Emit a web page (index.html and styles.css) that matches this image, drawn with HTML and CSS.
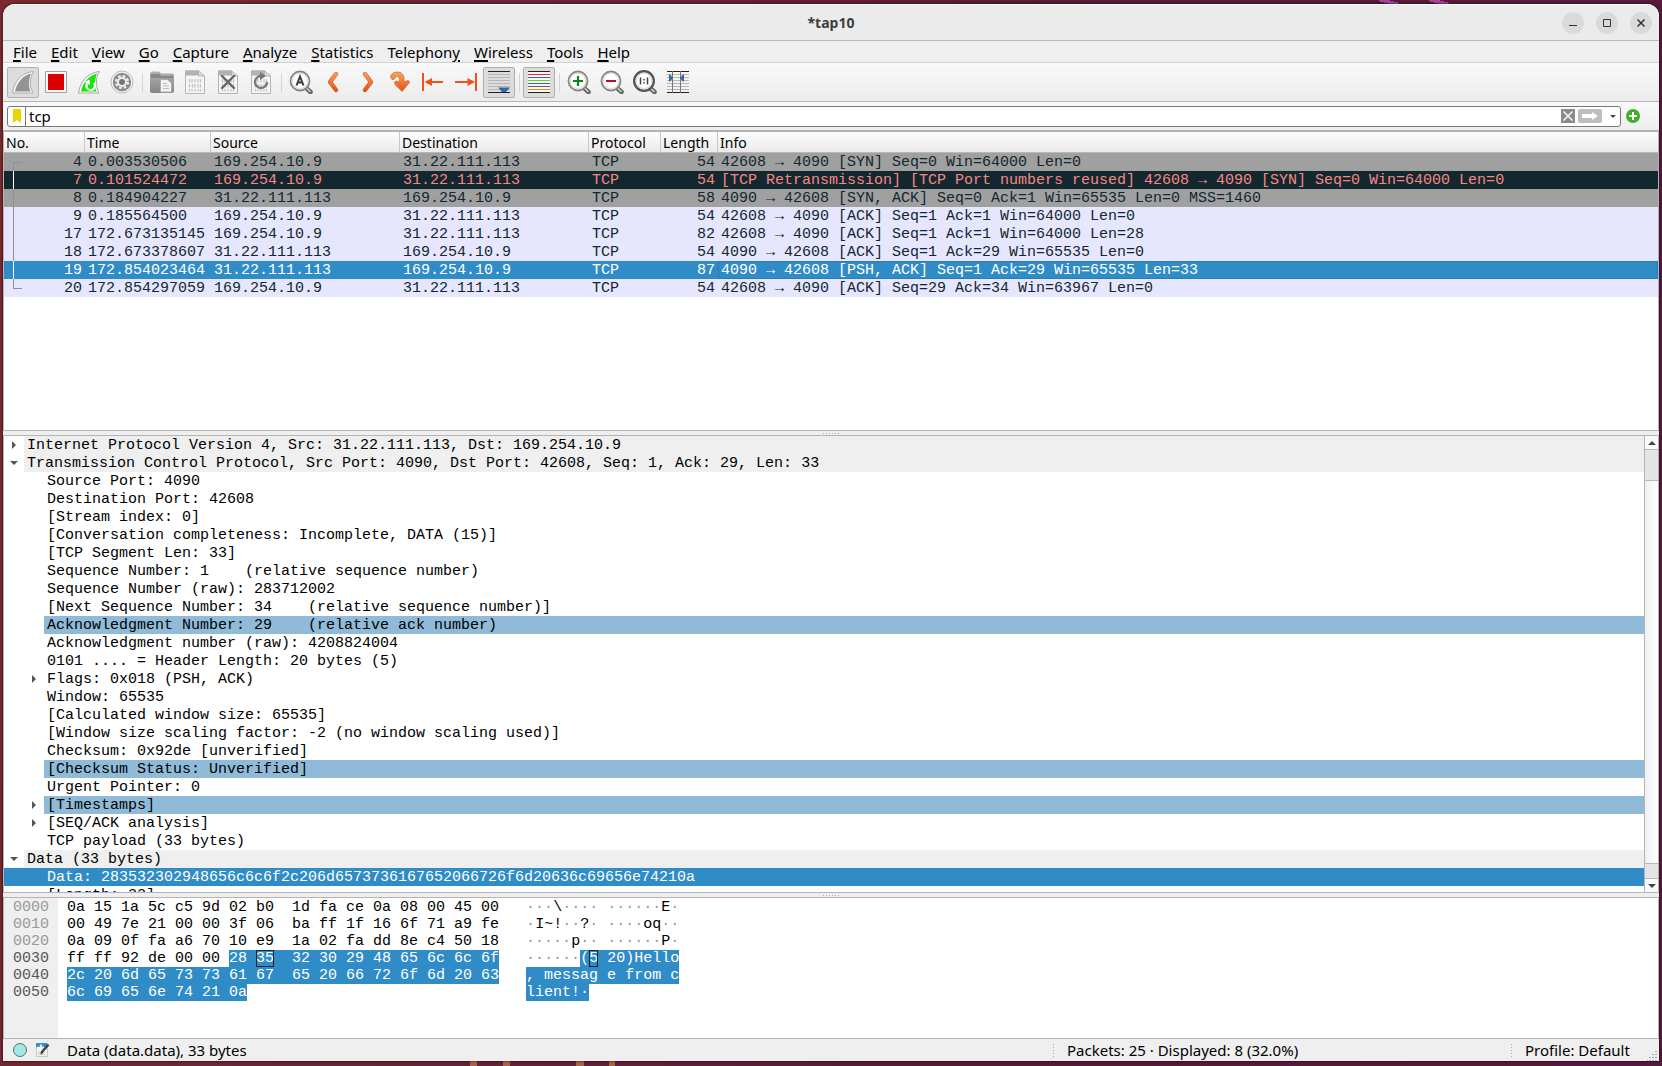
FILE: index.html
```html
<!DOCTYPE html>
<html lang="en">

<head>
    <meta charset="UTF-8">
    <title>*tap10</title>
    <link rel="stylesheet" href="styles.css">
</head>

<body>
    <div class="window">
        <!-- title bar -->
        <header class="titlebar">
            <h1>*tap10</h1>
            <div class="window-buttons">
                <button aria-label="Minimize"><svg width="22" height="22"><path d="M7 13.5h8" stroke="#333" /></svg></button>
                <button aria-label="Maximize"><svg width="22" height="22"><path d="M7.5 7.5h7v7h-7z" fill="none" stroke="#333" /></svg></button>
                <button aria-label="Close"><svg width="22" height="22"><path d="M7.500 7.500l7 7m0-7l-7 7" stroke="#333" stroke-width="1.500" /></svg></button>
            </div>
        </header>

        <!-- menu -->
        <nav class="menubar">
            <button><u>F</u>ile</button>
            <button><u>E</u>dit</button>
            <button><u>V</u>iew</button>
            <button><u>G</u>o</button>
            <button><u>C</u>apture</button>
            <button><u>A</u>nalyze</button>
            <button><u>S</u>tatistics</button>
            <button>Telephon<u>y</u></button>
            <button><u>W</u>ireless</button>
            <button><u>T</u>ools</button>
            <button><u>H</u>elp</button>
        </nav>

        <!-- toolbar -->
        <svg class="defs" width="0" height="0">
            <defs>
                <linearGradient id="orange" gradientUnits="userSpaceOnUse" x1="0" y1="2" x2="0" y2="22">
                    <stop offset="0" stop-color="#f8a860" />
                    <stop offset="1" stop-color="#ea4a10" />
                </linearGradient>
                <linearGradient id="gray" x1="0" y1="0" x2="0" y2="1">
                    <stop offset="0" stop-color="#b0b0b0" />
                    <stop offset="1" stop-color="#858585" />
                </linearGradient>
                <symbol id="page" viewBox="0 0 24 24">
                    <path d="M2.500 1h13l6 5v17.500h-19z" fill="#f6f6f6" stroke="#b4b4b4" />
                    <path d="M2 .500h14l-1 5H2z" fill="#b2b2b2" />
                    <path d="M15.500 1l6 5h-6z" fill="#ddd" stroke="#b4b4b4" />
                    <path d="M6.500 9v3.500M9 9v3.500M12 9v3.500M15 9v3.500M17.500 9v3.500M6.500 14v3.500M9.500 14v3.500M12 14v3.500M15 14v3.500M17.500 14v3.500M6.500 19v2.500M9 19v2.500M12 19v2.500M15 19v2.500M17.500 19v2.500" stroke="#c2c2c2" stroke-width="1.300" />
                </symbol>
                <symbol id="lens" viewBox="0 0 24 24">
                    <path d="M16 17l5.500 5" stroke="#63645f" stroke-width="4.500" stroke-linecap="round" />
                    <path d="M17.500 18l3.500 3.500" stroke="#d4d5cf" stroke-width="1.600" stroke-linecap="round" />
                    <circle cx="11" cy="11" r="9.500" fill="#fff" stroke="#85867f" stroke-width="1.800" />
                    <circle cx="11" cy="11" r="7.800" fill="none" stroke="#deded8" stroke-width="1.200" />
                </symbol>
            </defs>
        </svg>
        <div class="toolbar">
            <button class="pressed" aria-label="Start capture"><svg viewBox="0 0 24 24"><path d="M1.500 23C3 12 10 2.500 22.500 1.500c-4 6-4 15-.500 21.500z" fill="#f4f4f4" stroke="#b0b0b0" /><path d="M4 21.500C6 12.500 11.500 5.500 20 3.500c-2.500 6-2.500 12.500-.500 18z" fill="#949494" /></svg></button>
            <button aria-label="Stop capture"><svg viewBox="0 0 24 24"><path d="M1.500 1.500h21v21h-21z" fill="#f8f8f8" stroke="#a0a0a0" /><path d="M4 4h16v16H4z" fill="#db0000" /></svg></button>
            <button aria-label="Restart capture"><svg viewBox="0 0 24 24"><path d="M1.500 23C3 12 10 2.500 22.500 1.500c-4 6-4 15-.500 21.500z" fill="#f8f8f8" stroke="#aaa" /><path d="M4 21.500C6 12.500 11.500 5.500 20 3.500c-2.500 6-2.500 12.500-.500 18z" fill="#18e40c" /><path d="M10 13.500c-1.500 3 0 6.500 3.500 6.500 4.500 0 5.500-4.500 3.500-7" fill="none" stroke="#fff" stroke-width="2.200" /><path d="M7.500 12l5-2.500.500 5.500z" fill="#fff" /></svg></button>
            <button aria-label="Capture options"><svg viewBox="0 0 24 24"><circle cx="12" cy="12" r="11" fill="#f4f4f4" stroke="#bbb" /><circle cx="12" cy="12" r="9.200" fill="#8b8b8b" /><circle cx="12" cy="12" r="6" fill="none" stroke="#eee" stroke-width="2.200" stroke-dasharray="2.700 2.010" /><circle cx="12" cy="12" r="4" fill="#777" stroke="#eee" stroke-width="2" /></svg></button>
            <span class="separator"></span>
            <button aria-label="Open file"><svg viewBox="0 0 24 24"><path d="M0 4q0-2.500 2-2.500h7l2 2h11q2 0 2 2V21q0 2-2 2H2q-2 0-2-2z" fill="url(#gray)" /><path d="M1 8V4h8l2 2h12v2z" fill="#888" /><path d="M10.500 9.500h7l4 3.500v9h-11z" fill="#f2f2f2" stroke="#aaa" /><path d="M13 13.500h4M13 16h6M13 18.500h6" stroke="#bbb" /></svg></button>
            <button aria-label="Save file"><svg viewBox="0 0 24 24"><use href="#page" /></svg></button>
            <button aria-label="Close file"><svg viewBox="0 0 24 24"><use href="#page" /><path d="M6 6l12 12M18 6L6 18" stroke="#666" stroke-width="2.400" stroke-linecap="round" /></svg></button>
            <button aria-label="Reload file"><svg viewBox="0 0 24 24"><use href="#page" /><path d="M12 6a6 6 0 1 0 6 6" fill="none" stroke="#777" stroke-width="2.400" /><path d="M11 2l6 4-6 4z" fill="#777" /></svg></button>
            <span class="separator"></span>
            <button aria-label="Find packet"><svg viewBox="0 0 24 24"><use href="#lens" /><path d="M7.500 15.500L11 6.500l3.500 9M8.500 12.500h5" fill="none" stroke="#3c3c3c" stroke-width="2" /></svg></button>
            <button aria-label="Previous packet"><svg viewBox="0 0 24 24"><path d="M14 4l-6 8 6 8" fill="none" stroke="#c95f30" stroke-width="4.400" stroke-linecap="round" stroke-linejoin="round" /><path d="M14 4l-6 8 6 8" fill="none" stroke="url(#orange)" stroke-width="3.200" stroke-linecap="round" stroke-linejoin="round" /></svg></button>
            <button aria-label="Next packet"><svg viewBox="0 0 24 24"><path d="M10 4l6 8-6 8" fill="none" stroke="#c95f30" stroke-width="4.400" stroke-linecap="round" stroke-linejoin="round" /><path d="M10 4l6 8-6 8" fill="none" stroke="url(#orange)" stroke-width="3.200" stroke-linecap="round" stroke-linejoin="round" /></svg></button>
            <button aria-label="Go to packet"><svg viewBox="0 0 24 24"><path d="M2.500 7C3 1 15.500-.500 16 8v4l4-1.500q3 1-.500 4.500L14 21.500 7.500 15q-2.500-3.500 1-4l3 1V9c0-3-4-3.500-5 0q-3 2-4-2z" fill="url(#orange)" stroke="#d4713c" stroke-width=".8" /></svg></button>
            <button aria-label="First packet"><svg viewBox="0 0 24 24"><path d="M2 3v18M5 12h17" stroke="#f4511a" stroke-width="2" /><path d="M3.500 12L11 8v8z" fill="#f4511a" /></svg></button>
            <button aria-label="Last packet"><svg viewBox="0 0 24 24"><path d="M22 3v18M1 12h18" stroke="#f4511a" stroke-width="2" /><path d="M21 12l-7.500-4v8z" fill="#f4511a" /></svg></button>
            <button class="pressed" aria-label="Auto scroll"><svg viewBox="0 0 24 24"><path d="M1 1.500h22M1 22.500h22" stroke="#222" /><path d="M1 4.500h22M1 7.500h22M1 10.500h22M1 13.500h22M1 16.500h22M1 19.500h22" stroke="#b8b8b0" /><path d="M11 17.500h12l-4 4.500h-4z" fill="#3465a4" /></svg></button>
            <span class="separator"></span>
            <button class="pressed" aria-label="Colorize packets"><svg viewBox="0 0 24 24"><path d="M1 1h22v22H1z" fill="#fff" opacity=".7" /><path d="M1 1.500h22M1 22.500h22" stroke="#222" /><path d="M1 4.500h22" stroke="#ef2929" /><path d="M1 7.500h22" stroke="#3465a4" /><path d="M1 10.500h22" stroke="#73d216" /><path d="M1 13.500h22" stroke="#3465a4" /><path d="M1 16.500h22" stroke="#75507b" /><path d="M1 19.500h22" stroke="#c4a000" /></svg></button>
            <span class="separator"></span>
            <button aria-label="Zoom in"><svg viewBox="0 0 24 24"><use href="#lens" /><path d="M6 11h10M11 6v10" stroke="#108020" stroke-width="2.200" /></svg></button>
            <button aria-label="Zoom out"><svg viewBox="0 0 24 24"><use href="#lens" /><path d="M6 11h10" stroke="#c80820" stroke-width="2.200" /></svg></button>
            <button aria-label="Normal size"><svg viewBox="0 0 24 24"><use href="#lens" /><circle cx="11" cy="11" r="10" fill="none" stroke="#555" stroke-width="2" /><path d="M7.500 7.500v7M14.500 7.500v7M11 9v1.500M11 12v1.500" stroke="#444" stroke-width="1.500" /></svg></button>
            <button aria-label="Resize columns"><svg viewBox="0 0 24 24"><path d="M1 1.500h22M1 22.500h22" stroke="#222" /><path d="M1 4.500h22M1 7.500h22M1 10.500h22M1 13.500h22M1 16.500h22M1 19.500h22" stroke="#b8b8b0" /><path d="M6.500 1v22M14.500 1v22" stroke="#777" /><path d="M3 4.500h1l3 3.500-3 3.500H3zM18 4.500h-1L14 8l3 3.500h1z" fill="#3465a4" /></svg></button>
        </div>

        <!-- display filter -->
        <form class="filterbar">
            <div class="filter">
                <button type="button" class="bookmark" aria-label="Bookmarks"><svg width="8" height="14"><path d="M0 0h8v14l-4-3-4 3z" fill="#edd400" /></svg></button>
                <input type="text" value="tcp" aria-label="Display filter">
                <button type="button" aria-label="Clear"><svg width="14" height="14"><rect width="14" height="14" rx="1" fill="#8c8c86" /><path d="M2.500 2.500l9 9m0-9l-9 9" stroke="#fff" stroke-width="1.400" /></svg></button>
                <button type="button" aria-label="Apply"><svg width="24" height="14"><rect width="24" height="14" rx="2" fill="#bebebe" /><path d="M4 5h10V3l6 4-6 4V9H4z" fill="#fff" /></svg></button>
                <button type="button" class="history" aria-label="Filter history"><svg width="6" height="3"><path d="M0 0h6L3 3z" fill="#444" /></svg></button>
            </div>
            <button type="button" aria-label="Add filter button"><svg width="14" height="14"><circle cx="7" cy="7" r="7" fill="#3fae2a" /><path d="M3 7h8M7 3v8" stroke="#fff" stroke-width="2" /></svg></button>
        </form>

        <!-- packet list -->
        <section class="packet-list">
            <table>
                <colgroup>
                    <col class="col-no">
                    <col class="col-time">
                    <col class="col-addr">
                    <col class="col-addr">
                    <col class="col-proto">
                    <col class="col-len">
                    <col>
                </colgroup>
                <thead>
                    <tr><th>No.</th><th>Time</th><th>Source</th><th>Destination</th><th>Protocol</th><th>Length</th><th>Info</th></tr>
                </thead>
                <tbody>
                    <tr class="syn first"><td>4</td><td>0.003530506</td><td>169.254.10.9</td><td>31.22.111.113</td><td>TCP</td><td>54</td><td>42608 → 4090 [SYN] Seq=0 Win=64000 Len=0</td></tr>
                    <tr class="bad"><td>7</td><td>0.101524472</td><td>169.254.10.9</td><td>31.22.111.113</td><td>TCP</td><td>54</td><td>[TCP Retransmission] [TCP Port numbers reused] 42608 → 4090 [SYN] Seq=0 Win=64000 Len=0</td></tr>
                    <tr class="syn"><td>8</td><td>0.184904227</td><td>31.22.111.113</td><td>169.254.10.9</td><td>TCP</td><td>58</td><td>4090 → 42608 [SYN, ACK] Seq=0 Ack=1 Win=65535 Len=0 MSS=1460</td></tr>
                    <tr><td>9</td><td>0.185564500</td><td>169.254.10.9</td><td>31.22.111.113</td><td>TCP</td><td>54</td><td>42608 → 4090 [ACK] Seq=1 Ack=1 Win=64000 Len=0</td></tr>
                    <tr><td>17</td><td>172.673135145</td><td>169.254.10.9</td><td>31.22.111.113</td><td>TCP</td><td>82</td><td>42608 → 4090 [ACK] Seq=1 Ack=1 Win=64000 Len=28</td></tr>
                    <tr><td>18</td><td>172.673378607</td><td>31.22.111.113</td><td>169.254.10.9</td><td>TCP</td><td>54</td><td>4090 → 42608 [ACK] Seq=1 Ack=29 Win=65535 Len=0</td></tr>
                    <tr class="selected"><td>19</td><td>172.854023464</td><td>31.22.111.113</td><td>169.254.10.9</td><td>TCP</td><td>87</td><td>4090 → 42608 [PSH, ACK] Seq=1 Ack=29 Win=65535 Len=33</td></tr>
                    <tr class="last"><td>20</td><td>172.854297059</td><td>169.254.10.9</td><td>31.22.111.113</td><td>TCP</td><td>54</td><td>42608 → 4090 [ACK] Seq=29 Ack=34 Win=63967 Len=0</td></tr>
                </tbody>
            </table>
        </section>
        <div class="splitter"></div>

        <!-- packet details -->
        <section class="details">
            <ul class="tree">
                <li class="top closed"><span>Internet Protocol Version 4, Src: 31.22.111.113, Dst: 169.254.10.9</span></li>
                <li class="top open"><span>Transmission Control Protocol, Src Port: 4090, Dst Port: 42608, Seq: 1, Ack: 29, Len: 33</span></li>
                <li><span>Source Port: 4090</span></li>
                <li><span>Destination Port: 42608</span></li>
                <li><span>[Stream index: 0]</span></li>
                <li><span>[Conversation completeness: Incomplete, DATA (15)]</span></li>
                <li><span>[TCP Segment Len: 33]</span></li>
                <li><span>Sequence Number: 1    (relative sequence number)</span></li>
                <li><span>Sequence Number (raw): 283712002</span></li>
                <li><span>[Next Sequence Number: 34    (relative sequence number)]</span></li>
                <li class="related"><span>Acknowledgment Number: 29    (relative ack number)</span></li>
                <li><span>Acknowledgment number (raw): 4208824004</span></li>
                <li><span>0101 .... = Header Length: 20 bytes (5)</span></li>
                <li class="closed"><span>Flags: 0x018 (PSH, ACK)</span></li>
                <li><span>Window: 65535</span></li>
                <li><span>[Calculated window size: 65535]</span></li>
                <li><span>[Window size scaling factor: -2 (no window scaling used)]</span></li>
                <li><span>Checksum: 0x92de [unverified]</span></li>
                <li class="related"><span>[Checksum Status: Unverified]</span></li>
                <li><span>Urgent Pointer: 0</span></li>
                <li class="closed related"><span>[Timestamps]</span></li>
                <li class="closed"><span>[SEQ/ACK analysis]</span></li>
                <li><span>TCP payload (33 bytes)</span></li>
                <li class="top open"><span>Data (33 bytes)</span></li>
                <li class="selected"><span>Data: 283532302948656c6c6f2c206d6573736167652066726f6d20636c69656e74210a</span></li>
                <li><span>[Length: 33]</span></li>
            </ul>
            <div class="scrollbar">
                <button aria-label="Scroll up"><svg width="8" height="4"><path d="M0 4h8L4 0z" fill="#444" /></svg></button>
                <div class="thumb"></div>
                <div class="groove"></div>
                <div class="thumb thumb-end"></div>
                <button aria-label="Scroll down"><svg width="8" height="4"><path d="M0 0h8L4 4z" fill="#444" /></svg></button>
            </div>
        </section>
        <div class="splitter"></div>

        <!-- packet bytes -->
        <section class="bytes">
<pre class="offsets"><i>0000
0010
0020</i>
0030
0040
0050</pre>
<pre class="hex">0a 15 1a 5c c5 9d 02 b0  1d fa ce 0a 08 00 45 00
00 49 7e 21 00 00 3f 06  ba ff 1f 16 6f 71 a9 fe
0a 09 0f fa a6 70 10 e9  1a 02 fa dd 8e c4 50 18
ff ff 92 de 00 00 <mark>28 <b>35</b>  32 30 29 48 65 6c 6c 6f</mark>
<mark>2c 20 6d 65 73 73 61 67  65 20 66 72 6f 6d 20 63</mark>
<mark>6c 69 65 6e 74 21 0a</mark></pre>
<pre class="ascii"><i>···</i>\<i>···· ······</i>E<i>·</i>
<i>·</i>I~!<i>··</i>?<i>· ····</i>oq<i>··</i>
<i>·····</i>p<i>·· ······</i>P<i>·</i>
<i>······</i><mark>(<b>5</b> 20)Hello</mark>
<mark>, messag e from c</mark>
<mark>lient!·</mark></pre>
        </section>

        <!-- status bar -->
        <footer class="statusbar">
            <button aria-label="Expert information"><svg width="14" height="14"><circle cx="7" cy="7" r="6.500" fill="#a0e8e4" stroke="#52706e" /></svg></button>
            <button aria-label="Capture comment"><svg width="14" height="14"><path d="M.500 1h11v12.500H.500z" fill="#f4f4f0" stroke="#c8c8c4" /><path d="M0 0h11v4H0z" fill="#3a8fc8" /><path d="M2 4.500h6M5 1.500v6" stroke="#fff" stroke-width="1.600" /><path d="M2 9.500h7M2 11.500h7" stroke="#ccc" /><path d="M12.500 1.500l-7 8" stroke="#444" stroke-width="2.500" /><path d="M4.500 11.500l.500-3 2 1.500z" fill="#222" /></svg></button>
            <span class="status-field">Data (data.data), 33 bytes</span>
            <span class="status-packets">Packets: 25 · Displayed: 8 (32.0%)</span>
            <span class="status-profile">Profile: Default</span>
            <svg class="grip" width="10" height="10"><path d="M9 0v10M6 3v7M3 6v4M0 9v1" stroke="#aaa" stroke-width="2" stroke-dasharray="1 2" /></svg>
        </footer>
    </div>
</body>

</html>
```
FILE: styles.css
```css
* {
    box-sizing: border-box;
}

body {
    height: 100vh;
    margin: 0;
    padding: 4px 3px 5px;
    font: 15px/20px "Noto Sans", "Open Sans", sans-serif;
    color: #000;
    /* desktop wallpaper, only its edges show around the window */
    background:
        linear-gradient(15deg, transparent 30%, #a8459a 30%, #a8459a 70%, transparent 70%) 84% 0 / 20px 4px no-repeat,
        linear-gradient(15deg, transparent 30%, #a8459a 30%, #a8459a 70%, transparent 70%) 87% 0 / 20px 4px no-repeat,
        linear-gradient(#b0604c, #b0604c) 28.4% 100% / 7px 5px no-repeat,
        linear-gradient(#b0604c, #b0604c) 30.4% 100% / 7px 5px no-repeat,
        linear-gradient(#b0604c, #b0604c) 34.8% 100% / 8px 5px no-repeat,
        linear-gradient(#b0604c, #b0604c) 36.8% 100% / 6px 5px no-repeat,
        linear-gradient(100deg, #7b2a2e, #6c2338 30%, #571b38 60%, #571a3e);
}

button {
    display: flex;
    align-items: center;
    justify-content: center;
    padding: 0;
    border: none;
    background: none;
    font: inherit;
    color: inherit;
}

.window {
    display: flex;
    flex-direction: column;
    height: 100%;
    overflow: hidden;
    border-radius: 12px 12px 0 0;
    background: #efefef;
    box-shadow: 0 0 2px 1px rgba(0, 0, 0, 0.4);
}

.defs {
    position: absolute;
}

/* title bar */
.titlebar {
    display: grid;
    grid-template-columns: 1fr auto 1fr;
    align-items: center;
    flex: none;
    height: 37px;
    padding: 0 7px;
    border-top: 1px solid #fff;
    border-bottom: 1px solid #bbb;
    background: #ebebeb;
}

.titlebar h1 {
    grid-column: 2;
    margin: 0;
    font-size: 14px;
    color: #3d3d3d;
}

.window-buttons {
    display: flex;
    justify-content: flex-end;
    gap: 12px;
}

.window-buttons button {
    border-radius: 50%;
    background: #dadada;
}

/* menu */
.menubar {
    display: flex;
    flex: none;
    gap: 14px;
    height: 22px;
    padding: 0 10px;
    border-bottom: 1px solid #d2d2d2;
}

.menubar button {
    display: block;
}

.menubar u {
    text-decoration-thickness: 2px;
    text-underline-offset: 2px;
}

/* toolbar */
.toolbar {
    display: flex;
    align-items: center;
    flex: none;
    gap: 1px;
    height: 39px;
    padding: 0 4px;
    border-bottom: 1px solid #b6b6b6;
    background: linear-gradient(#f9f9f9, #ececec);
}

.toolbar button {
    width: 32px;
    height: 31px;
    border: 1px solid transparent;
    border-radius: 2px;
}

.toolbar .pressed {
    border-color: #b0b0b0;
    background: #dcdcdc;
}

.toolbar svg {
    width: 24px;
    height: 24px;
}

.separator {
    width: 6px;
    height: 19px;
    border-left: 1px solid #d4d4d4;
    margin-left: 3px;
    margin-right: -3px;
}

/* display filter */
.filterbar {
    display: flex;
    align-items: center;
    flex: none;
    gap: 5px;
    height: 30px;
    padding: 0 19px 0 4px;
    border-bottom: 2px solid #b4b4b4;
    background: linear-gradient(#f9f9f9, #eee);
}

.filter {
    display: flex;
    align-items: center;
    flex: 1;
    gap: 3px;
    height: 21px;
    border: 1px solid #777;
    border-radius: 3px;
    background: #fff;
}

.bookmark {
    width: 18px;
    height: 19px;
    border-right: 1px solid #777;
}

.filter input {
    flex: 1;
    min-width: 0;
    height: 19px;
    padding: 0;
    border: none;
    outline: none;
    background: none;
    font: inherit;
}

.history {
    width: 15px;
}

/* packet list */
.packet-list {
    flex: none;
    height: 299px;
    border: 1px solid #b4b4b4;
    border-top: none;
    background: #fff;
}

table {
    width: 100%;
    border-spacing: 0;
    table-layout: fixed;
}

.col-no {
    width: 81px;
}

.col-time {
    width: 126px;
}

.col-addr {
    width: 189px;
}

.col-proto {
    width: 72px;
}

.col-len {
    width: 57px;
}

th {
    height: 21px;
    padding: 0 2px;
    border-right: 1px solid #c8c8c8;
    background: linear-gradient(#fdfdfd, #e9e9e9);
    box-shadow: inset 0 -1px #b8b8b8;
    font-size: 14px;
    font-weight: normal;
    text-align: left;
}

th:last-child {
    border-right: none;
}

td {
    height: 18px;
    padding: 1px 3px 0;
    white-space: nowrap;
}

tbody,
.tree,
pre {
    font: 15px/17px "Liberation Mono", monospace;
}

tbody tr {
    color: #12272e;
    background: #e7e6ff;
}

td:nth-child(1),
td:nth-child(6) {
    text-align: right;
}

/* line that joins the packets of one conversation */
td:first-child {
    background: linear-gradient(#8b9196, #8b9196) 9px 0 / 1px 100% no-repeat;
}

.first td:first-child {
    background:
        linear-gradient(#8b9196, #8b9196) 9px 9px / 1px 9px no-repeat,
        linear-gradient(#8b9196, #8b9196) 9px 9px / 9px 1px no-repeat;
}

.last td:first-child {
    background:
        linear-gradient(#8b9196, #8b9196) 9px 0 / 1px 9px no-repeat,
        linear-gradient(#8b9196, #8b9196) 9px 9px / 9px 1px no-repeat;
}

.bad td:first-child,
.selected td:first-child {
    background: linear-gradient(#fff, #fff) 9px 0 / 1px 100% no-repeat;
}

tbody .syn {
    background: #a0a0a0;
}

tbody .bad {
    color: #f78787;
    background: #12272e;
}

tbody .selected {
    color: #fff;
    background: #308cc6;
}

.selected td:last-child {
    box-shadow: inset 0 0 0 1px #2a7db1;
}

.splitter {
    flex: none;
    height: 4px;
    background: repeating-linear-gradient(90deg, #aaa 0 1px, transparent 1px 3px) center / 17px 1px no-repeat;
}

/* packet details */
.details {
    display: flex;
    flex: 1;
    min-height: 0;
    border: 1px solid #b4b4b4;
    background: #fff;
}

.tree {
    flex: 1;
    min-width: 0;
    margin: 0;
    padding: 0;
    overflow: hidden;
    list-style: none;
}

.tree li {
    display: flex;
    align-items: center;
    height: 18px;
    padding-left: 20px;
}

.tree li::before {
    content: "";
    flex: none;
    width: 20px;
    height: 8px;
}

.tree .top {
    padding-left: 0;
}

.tree span {
    flex: 1;
    padding: 1px 0 0 3px;
    white-space: pre;
}

.tree .closed::before {
    background: #555;
    clip-path: polygon(8px 0, 12px 4px, 8px 8px);
}

.tree .open::before {
    background: #555;
    clip-path: polygon(6px 2px, 14px 2px, 10px 6px);
}

.tree .top span {
    background: #efefef;
}

.tree .related span {
    background: #8fbbd9;
}

.tree .selected {
    color: #fff;
    background: #308cc6;
}

.scrollbar {
    display: flex;
    flex-direction: column;
    width: 14px;
    border-left: 1px solid #b4b4b4;
}

.scrollbar button {
    height: 13px;
    background: #fafafa;
}

.thumb {
    height: 32px;
    border: solid #b8b8b8;
    border-width: 1px 0;
    background: #e4e4e4;
}

.thumb-end {
    height: 16px;
}

.groove {
    flex: 1;
    background: linear-gradient(90deg, #f0f0f0, #fff);
}

/* packet bytes */
.bytes {
    display: flex;
    flex: none;
    height: 142px;
    border: 1px solid #b4b4b4;
    background: #fff;
}

pre {
    margin: 0;
    padding-top: 1px;
}

.offsets {
    width: 54px;
    margin-right: 9px;
    padding-left: 9px;
    background: #efefef;
    color: #555;
}

.hex {
    margin-right: 18px;
    padding-right: 9px;
}

pre i {
    font-style: normal;
    color: #999;
}

pre mark {
    color: #fff;
    background: #308cc6;
}

pre b {
    font-weight: normal;
    outline: 1px solid #12272e;
    outline-offset: -1px;
}

/* status bar */
.statusbar {
    display: flex;
    align-items: center;
    flex: none;
    height: 22px;
    padding-left: 10px;
}

.statusbar button {
    width: 14px;
    margin-right: 9px;
}

.status-field {
    flex: 1;
    padding-left: 8px;
}

.status-packets,
.status-profile {
    padding-left: 14px;
    background: repeating-linear-gradient(#aaa 0 1px, transparent 1px 3px) 0 4px / 1px 13px no-repeat;
}

.status-packets {
    width: 458px;
}

.status-profile {
    width: 134px;
}

.grip {
    align-self: flex-end;
    margin: 0 2px;
}
```
